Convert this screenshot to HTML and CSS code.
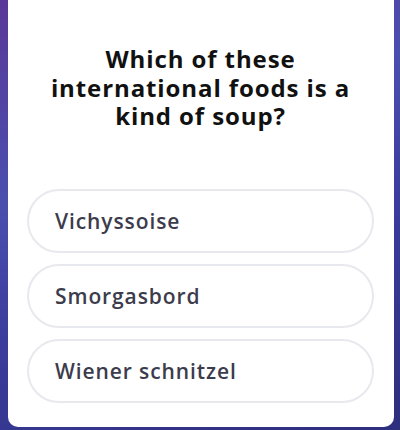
FILE: index.html
```html
<!DOCTYPE html>
<html>
<head>
<meta charset="utf-8">
<link rel="stylesheet" href="styles.css">
</head>
<body>
<div class="card">
  <h1 class="question">Which of these international foods is a kind of soup?</h1>
  <div class="options">
    <div class="option">Vichyssoise</div>
    <div class="option">Smorgasbord</div>
    <div class="option">Wiener schnitzel</div>
  </div>
</div>
</body>
</html>
```
FILE: styles.css
```css
html, body {
  margin: 0;
  padding: 0;
  height: 430px;
  overflow: hidden;
}
body {
  background: linear-gradient(160deg, #5a3898 0%, #4a4fae 35%, #3b3c9c 60%, #2d2e7c 100%);
  font-family: "Open Sans", "Noto Sans", sans-serif;
}
.card {
  margin-left: 8px;
  width: 386px;
  height: 427px;
  background: #fff;
  border-radius: 0 0 10px 10px;
  box-sizing: border-box;
  padding: 45px 20px 0 19px;
  display: flex;
  flex-direction: column;
}
.question {
  margin: 0 auto;
  width: 320px;
  text-align: center;
  font-size: 24px;
  line-height: 28.5px;
  letter-spacing: 0.9px;
  font-weight: 700;
  color: #111;
}
.options {
  margin-top: 58px;
  display: flex;
  flex-direction: column;
  gap: 11px;
}
.option {
  height: 64px;
  box-sizing: border-box;
  border: 2px solid #e8e8ef;
  border-radius: 32px;
  display: flex;
  align-items: center;
  padding-left: 26px;
  font-size: 21px;
  font-weight: 600;
  letter-spacing: 0.9px;
  color: #3c3c4c;
}
```
